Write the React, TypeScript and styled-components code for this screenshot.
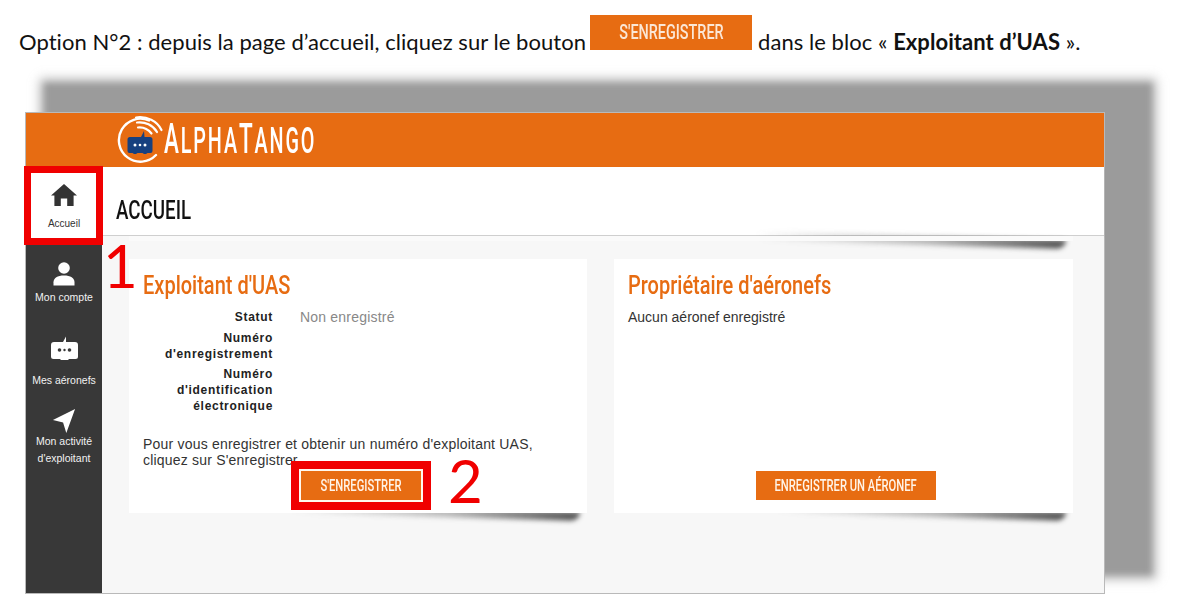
import React from "react";
import styled, { createGlobalStyle } from "styled-components";

const ORANGE = "#e76c12";
const RED = "#f00000";

const GlobalStyle = createGlobalStyle`
  html, body {
    margin: 0;
    padding: 0;
    background: #fff;
  }
`;

const Page = styled.div`
  position: relative;
  z-index: 0;
  width: 1177px;
  height: 615px;
  overflow: hidden;
  background: #fff;
  font-family: "Liberation Sans", Arial, sans-serif;
`;

const Intro = styled.p`
  margin: 0;
  height: 112px;
  padding: 15px 0 0 19px;
  box-sizing: border-box;
  font-family: Lato, "Open Sans", sans-serif;
  font-size: 22px;
  line-height: 20px;
  color: #111;
  white-space: nowrap;
  letter-spacing: 0.05px;

  b {
    font-weight: 700;
  }
`;

const IntroButton = styled.span`
  display: inline-block;
  width: 162px;
  height: 35px;
  margin: 0 6px 0 4px;
  text-align: center;
  background: ${ORANGE};
  overflow: hidden;
`;

interface ICondensed {
  $sx: number;
  $origin?: string;
}

const Condensed = styled.span<ICondensed>`
  display: inline-block;
  white-space: nowrap;
  transform: scaleX(${props => props.$sx});
  transform-origin: ${props => props.$origin || "left"} center;
`;

const IntroButtonText = styled(Condensed)`
  font-family: Roboto, sans-serif;
  font-weight: 500;
  font-size: 20px;
  line-height: 34px;
  letter-spacing: 0;
  color: #fbe7d6;
`;

const Window = styled.div`
  position: relative;
  width: 1080px;
  height: 482px;
  margin-left: 25px;
  box-sizing: border-box;
  border: 1px solid #b9b9b9;
  display: flex;
  flex-direction: column;

  &::before {
    content: "";
    position: absolute;
    z-index: -1;
    left: 18px;
    top: -30px;
    right: -48px;
    bottom: 18px;
    background: #9b9b9b;
    box-shadow: 0 0 8px 4px rgba(155, 155, 155, 0.75);
    filter: blur(3px);
  }
`;

const Header = styled.header`
  height: 54px;
  flex: none;
  background: ${ORANGE};
  display: flex;
  align-items: center;
  gap: 1px;
  padding-left: 91px;
`;

const LogoText = styled(Condensed)`
  font-family: Roboto, sans-serif;
  font-weight: 500;
  font-size: 37px;
  line-height: 44px;
  color: #fff;
  letter-spacing: 3.5px;

  b {
    font-weight: 500;
    font-size: 42px;
  }
`;

const Body = styled.div`
  flex: 1;
  min-height: 0;
  display: flex;
`;

const Sidebar = styled.nav`
  width: 76px;
  flex: none;
  background: #383838;
  display: flex;
  flex-direction: column;
`;

interface INavItem {
  $active?: boolean;
  $height: number;
  $pad: number;
  $gap: number;
}

const NavItem = styled.a<INavItem>`
  height: ${props => props.$height}px;
  box-sizing: border-box;
  padding-top: ${props => props.$pad}px;
  display: flex;
  flex-direction: column;
  align-items: center;
  gap: ${props => props.$gap}px;
  background: ${props => (props.$active ? "#fff" : "transparent")};
  color: ${props => (props.$active ? "#333" : "#f2f2f2")};
  font-size: ${props => (props.$active ? "10px" : "10.5px")};
  line-height: 17px;
  text-align: center;

  svg {
    flex: none;
  }
`;

const Main = styled.main`
  flex: 1;
  min-width: 0;
  display: flex;
  flex-direction: column;
`;

const TitleBar = styled.div`
  height: 69px;
  flex: none;
  box-sizing: border-box;
  background: #fff;
  border-bottom: 1px solid #cfcfcf;
  box-shadow: 0 1px 2px rgba(0, 0, 0, 0.08);
  padding: 28px 0 0 14px;
`;

const Title = styled(Condensed)`
  font-family: Roboto, sans-serif;
  font-weight: 500;
  font-size: 25px;
  line-height: 32px;
  color: #111;
`;

const Content = styled.div`
  position: relative;
  z-index: 0;
  flex: 1;
  background: #f7f7f7;
  padding: 0 31px 0 27px;
`;

const shadowStyles = `
  content: "";
  position: absolute;
  z-index: -1;
  right: 7px;
  bottom: -8px;
  height: 9px;
  border-radius: 0 0 10px 0;
  filter: blur(2.5px);
  transform: rotate(1.6deg);
  transform-origin: right bottom;
  background: linear-gradient(to right, rgba(70, 70, 70, 0), rgba(70, 70, 70, 0.35) 55%, rgba(50, 50, 50, 0.8) 96%);
`;

const ClippedCard = styled.div`
  position: relative;
  height: 5px;
  background: #fafafa;

  &::after {
    ${shadowStyles}
    width: 310px;
  }
`;

const Cards = styled.div`
  display: grid;
  grid-template-columns: 458px 459px;
  gap: 27px;
  margin-top: 18px;
`;

interface ICard {
  $shadow: number;
}

const Card = styled.section<ICard>`
  position: relative;
  height: 254px;
  box-sizing: border-box;
  background: #fff;
  padding: 9px 14px 13px;
  display: flex;
  flex-direction: column;

  &::after {
    ${shadowStyles}
    width: ${props => props.$shadow}px;
  }
`;

const CardTitle = styled(Condensed)`
  font-family: Roboto, sans-serif;
  font-weight: 500;
  font-size: 26px;
  line-height: 34px;
  color: ${ORANGE};
`;

const InfoGrid = styled.dl`
  margin: 7px 0 0;
  display: grid;
  grid-template-columns: 130px 1fr;
  column-gap: 27px;
  row-gap: 4.5px;
  font-size: 12px;
  line-height: 16px;
`;

const InfoLabel = styled.dt`
  font-weight: 700;
  text-align: right;
  color: #222;
  letter-spacing: 0.7px;
`;

const InfoValue = styled.dd`
  margin: 0;
  font-size: 14px;
  color: #888;
  letter-spacing: 0.2px;
`;

const Paragraph = styled.p`
  margin: 22px 0 0;
  font-size: 14px;
  line-height: 16px;
  color: #333;
  letter-spacing: 0.2px;
`;

const PlainText = styled.p`
  margin: 7px 0 0;
  font-size: 14px;
  line-height: 16px;
  color: #333;
  flex: 1;
`;

interface IButton {
  $width: number;
  $framed?: boolean;
}

const Button = styled.a<IButton>`
  align-self: center;
  width: ${props => props.$width}px;
  height: 29px;
  margin-left: 4px;
  flex: none;
  background: ${ORANGE};
  display: flex;
  justify-content: center;
  align-items: center;
  overflow: hidden;
  box-shadow: ${props =>
    props.$framed ? `0 0 0 2px #fff8ee, 0 0 0 10px ${RED}` : "none"};
`;

const ButtonText = styled(Condensed)`
  font-family: Roboto, sans-serif;
  font-weight: 500;
  font-size: 16px;
  color: #fff4e8;
`;

const LeftCardButton = styled(Button)`
  margin: auto 0 0 158px;
  align-self: flex-start;
`;

const NavFrame = styled.div`
  position: absolute;
  left: -2px;
  top: 53px;
  width: 79px;
  height: 79px;
  box-sizing: border-box;
  border: 7px solid ${RED};
`;

interface IMarker {
  $left: number;
  $top: number;
}

const Marker = styled.span<IMarker>`
  position: absolute;
  left: ${props => props.$left}px;
  top: ${props => props.$top}px;
  font-family: Lato, sans-serif;
  font-size: 60px;
  line-height: 40px;
  color: ${RED};
`;

const LogoIcon = () => (
  <svg width="46" height="50" viewBox="0 0 46 50" fill="none">
    <path d="M32 5.500A21.500 21.500 0 1 0 39 40" stroke="#fff" strokeWidth="2.400" strokeLinecap="round" />
    <path d="M19 2.500C30 1 40 6 44.500 15" stroke="#fff" strokeWidth="2.200" strokeLinecap="round" />
    <path d="M20 7.500C28 6.500 36 10 40 17" stroke="#fff" strokeWidth="2.200" strokeLinecap="round" />
    <path d="M21 12.500C26 12 31 14 34.500 18.500" stroke="#fff" strokeWidth="2.200" strokeLinecap="round" />
    <path d="M24 22l3-6 .5 6H33a2.500 2.500 0 0 1 2.500 2.500V36a2 2 0 0 1-2 2h-3l-1.500 1H27l-1.500-1h-5l-1.500 1h-2l-1.500-1h-3a2 2 0 0 1-2-2V24.500A2.500 2.500 0 0 1 13 22z" fill="#17407f" />
    <circle cx="18" cy="30" r="1.500" fill="#fff" />
    <circle cx="23" cy="30" r="1.300" fill="#fff" />
    <circle cx="28" cy="30" r="1.500" fill="#fff" />
  </svg>
);

const HomeIcon = () => (
  <svg width="26" height="22" viewBox="0 0 26 22" fill="#333">
    <path d="M13 0L26 11.500h-3.400V22h-6.400v-7.500H9.800V22H3.400V11.500H0z" />
  </svg>
);

const UserIcon = () => (
  <svg width="24" height="24" viewBox="0 0 24 24" fill="#fff">
    <circle cx="12" cy="6" r="5.800" />
    <path d="M1.500 23.500v-3.200C1.500 16 5.500 13.500 12 13.500s10.500 2.500 10.500 6.800v3.200z" />
  </svg>
);

const RobotIcon = () => (
  <svg width="27" height="24" viewBox="0 0 27 24" fill="#fff">
    <path d="M12 6l3-5.500V6h9a3 3 0 0 1 3 3v11.500a2.500 2.500 0 0 1-2.500 2.500H18l-1 1h-7l-1-1H2.500A2.500 2.500 0 0 1 0 20.500V9a3 3 0 0 1 3-3z" />
    <circle cx="8.500" cy="14" r="1.800" fill="#383838" />
    <circle cx="13.500" cy="14" r="1.200" fill="#383838" />
    <circle cx="18.500" cy="14" r="1.800" fill="#383838" />
  </svg>
);

const ArrowIcon = () => (
  <svg width="24" height="24" viewBox="0 0 24 26" fill="#fff">
    <path d="M24 0L14.500 26 11 14.500 0 12z" />
  </svg>
);

const App: React.FC = () => (
  <Page>
    <GlobalStyle />
    <Intro>
      Option N°2 : depuis la page d’accueil, cliquez sur le bouton
      <IntroButton>
        <IntroButtonText $sx={0.72} $origin="center">S'ENREGISTRER</IntroButtonText>
      </IntroButton>
      dans le bloc « <b>Exploitant d’UAS</b> ».
    </Intro>
    <Window>
      <Header>
        <LogoIcon />
        <LogoText $sx={0.535}>
          <b>A</b>LPHA<b>T</b>ANGO
        </LogoText>
      </Header>
      <Body>
        <Sidebar>
          <NavItem $active $height={76} $pad={17} $gap={9}>
            <HomeIcon />
            Accueil
          </NavItem>
          <NavItem $height={77} $pad={19} $gap={3}>
            <UserIcon />
            Mon compte
          </NavItem>
          <NavItem $height={74} $pad={16} $gap={12}>
            <RobotIcon />
            Mes aéronefs
          </NavItem>
          <NavItem $height={90} $pad={15} $gap={0}>
            <ArrowIcon />
            <span>
              Mon activité
              <br />
              d'exploitant
            </span>
          </NavItem>
        </Sidebar>
        <Main>
          <TitleBar>
            <Title $sx={0.75}>ACCUEIL</Title>
          </TitleBar>
          <Content>
            <ClippedCard />
            <Cards>
              <Card $shadow={290}>
                <CardTitle $sx={0.77}>Exploitant d'UAS</CardTitle>
                <InfoGrid>
                  <InfoLabel>Statut</InfoLabel>
                  <InfoValue>Non enregistré</InfoValue>
                  <InfoLabel>
                    Numéro
                    <br />
                    d'enregistrement
                  </InfoLabel>
                  <InfoValue />
                  <InfoLabel>
                    Numéro
                    <br />
                    d'identification
                    <br />
                    électronique
                  </InfoLabel>
                  <InfoValue />
                </InfoGrid>
                <Paragraph>
                  Pour vous enregistrer et obtenir un numéro d'exploitant UAS,
                  <br />
                  cliquez sur S'enregistrer.
                </Paragraph>
                <LeftCardButton $width={120} $framed>
                  <ButtonText $sx={0.7} $origin="center">S'ENREGISTRER</ButtonText>
                </LeftCardButton>
              </Card>
              <Card $shadow={290}>
                <CardTitle $sx={0.77}>Propriétaire d'aéronefs</CardTitle>
                <PlainText>Aucun aéronef enregistré</PlainText>
                <Button $width={180}>
                  <ButtonText $sx={0.7} $origin="center">ENREGISTRER UN AÉRONEF</ButtonText>
                </Button>
              </Card>
            </Cards>
          </Content>
        </Main>
      </Body>
      <NavFrame />
      <Marker $left={77} $top={132}>1</Marker>
      <Marker $left={422} $top={347}>2</Marker>
    </Window>
  </Page>
);

export default App;
